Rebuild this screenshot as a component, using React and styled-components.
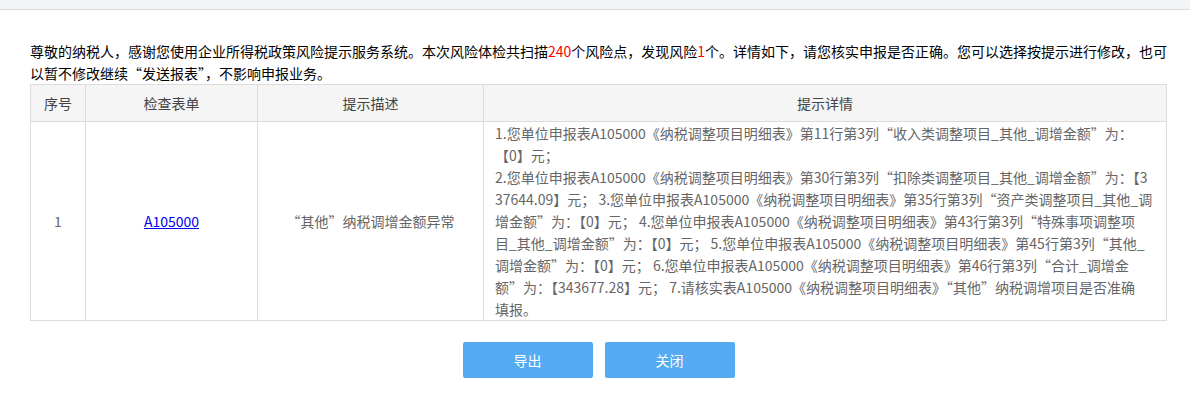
import styled, { createGlobalStyle } from "styled-components"

const GlobalStyle = createGlobalStyle`
    html, body {
        margin: 0;
        padding: 0;
        background: #fff;
        font-family: "Noto Sans CJK SC", "Liberation Sans", sans-serif;
    }
`

const TopBar = styled.div`
    height: 9px;
    background: #f2f3f7;
    border-bottom: 1px solid #dcdcdc;
`

const Content = styled.div`
    padding: 30px 23px 0 30px;
`

const Intro = styled.p`
    margin: 0;
    font-size: 14px;
    line-height: 22px;
    color: #000;
`

const Line = styled.span`
    display: block;
    white-space: nowrap;
`

const Red = styled.span`
    color: #f00;
`

const Table = styled.table`
    width: 100%;
    border-collapse: collapse;
    table-layout: fixed;
    font-size: 14px;
`

const Th = styled.th`
    width: ${p => p.$w ? p.$w + 'px' : 'auto'};
    height: 36px;
    padding: 0;
    background: #f5f5f5;
    border: 1px solid #dcdcdc;
    font-weight: normal;
    color: #444;
    text-align: center;
`

const Td = styled.td`
    border: 1px solid #dcdcdc;
    padding: ${p => p.$detail ? '0 10px 0 11px' : '0'};
    color: #666;
    line-height: 22px;
    text-align: ${p => p.$detail ? 'left' : 'center'};
    vertical-align: middle;
`

const FormLink = styled.a`
    color: #0000ee;
    text-decoration: underline;
`

const Actions = styled.div`
    display: flex;
    justify-content: center;
    gap: 12px;
    margin-top: 21px;
`

const Boton = styled.button`
    width: 130px;
    height: 36px;
    border: none;
    border-radius: 2px;
    background: #54abf1;
    color: #fff;
    font-family: inherit;
    font-size: 14px;
    cursor: pointer;
`

const detalle = [
    '1.您单位申报表A105000《纳税调整项目明细表》第11行第3列“收入类调整项目_其他_调增金额”为：',
    '【0】元；',
    '2.您单位申报表A105000《纳税调整项目明细表》第30行第3列“扣除类调整项目_其他_调增金额”为：【3',
    '37644.09】元； 3.您单位申报表A105000《纳税调整项目明细表》第35行第3列“资产类调整项目_其他_调',
    '增金额”为：【0】元； 4.您单位申报表A105000《纳税调整项目明细表》第43行第3列“特殊事项调整项',
    '目_其他_调增金额”为：【0】元； 5.您单位申报表A105000《纳税调整项目明细表》第45行第3列“其他_',
    '调增金额”为：【0】元； 6.您单位申报表A105000《纳税调整项目明细表》第46行第3列“合计_调增金',
    '额”为：【343677.28】元； 7.请核实表A105000《纳税调整项目明细表》“其他”纳税调增项目是否准确',
    '填报。',
]

const App = () => {
    return (
        <>
            <GlobalStyle />
            <TopBar />
            <Content>
                <Intro>
                    <Line>
                        尊敬的纳税人，感谢您使用企业所得税政策风险提示服务系统。本次风险体检共扫描<Red>240</Red>个风险点，发现风险<Red>1</Red>个。详情如下，请您核实申报是否正确。您可以选择按提示进行修改，也可
                    </Line>
                    <Line>以暂不修改继续“发送报表”，不影响申报业务。</Line>
                </Intro>
                <Table>
                    <thead>
                        <tr>
                            <Th $w={54}>序号</Th>
                            <Th $w={171}>检查表单</Th>
                            <Th $w={225}>提示描述</Th>
                            <Th>提示详情</Th>
                        </tr>
                    </thead>
                    <tbody>
                        <tr>
                            <Td>1</Td>
                            <Td><FormLink href="#">A105000</FormLink></Td>
                            <Td>“其他”纳税调增金额异常</Td>
                            <Td $detail>
                                {detalle.map((l, i) => <Line key={i}>{l}</Line>)}
                            </Td>
                        </tr>
                    </tbody>
                </Table>
                <Actions>
                    <Boton>导出</Boton>
                    <Boton>关闭</Boton>
                </Actions>
            </Content>
        </>
    )
}

export default App
